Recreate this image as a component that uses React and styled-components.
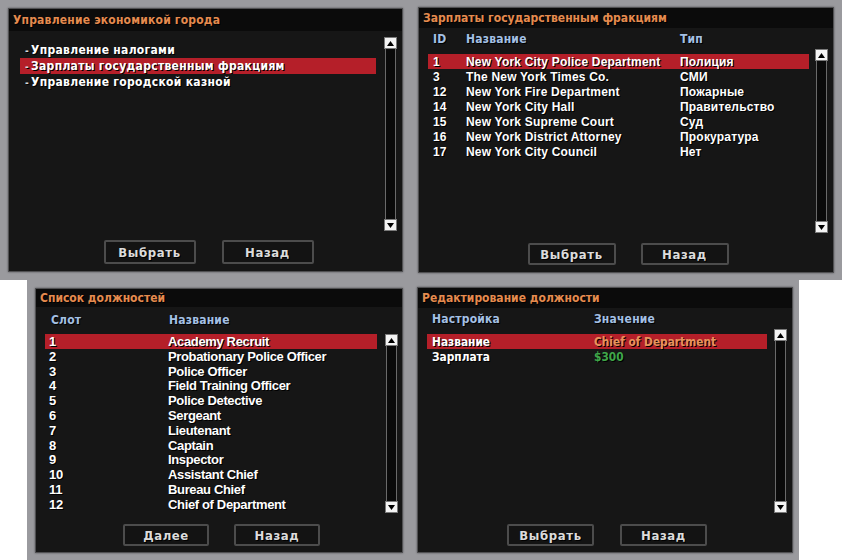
import React from 'react'
import styled, { createGlobalStyle } from 'styled-components'

const GlobalStyle = createGlobalStyle`
  html, body {
    margin: 0;
    padding: 0;
    background: #ffffff;
  }
`

const gtaFont = `
  font-family: "DejaVu Sans Condensed", "DejaVu Sans", sans-serif;
  font-stretch: condensed;
  font-weight: bold;
`

const Page = styled.div`
  width: 842px;
  height: 560px;
  background: #ffffff;
  overflow: hidden;
`

const Strip = styled.div`
  display: flex;
  align-items: flex-start;
  background: #9a9a9e;
  height: 280px;
  width: ${p => p.$width}px;
  margin-left: ${p => p.$offset || 0}px;
  padding: ${p => p.$pad};
  gap: ${p => p.$gap}px;
  box-sizing: border-box;
`

const Panel = styled.div`
  display: flex;
  flex-direction: column;
  width: ${p => p.$w}px;
  height: ${p => p.$h}px;
  margin-top: ${p => p.$top || 0}px;
  background: #161616;
  outline: 1px solid #505052;
  outline-offset: -1px;
  box-shadow: 0 0 2px rgba(0, 0, 0, 0.45);
  flex-shrink: 0;
`

const TitleBar = styled.div`
  ${gtaFont}
  height: ${p => p.$h}px;
  display: flex;
  align-items: center;
  padding-left: 5px;
  background: #0b0b0b;
  color: #e58b4f;
  font-size: 12px;
  letter-spacing: ${p => p.$spacing || 0}px;
  text-shadow: 1px 1px 0 #000;
  flex-shrink: 0;
`

const Body = styled.div`
  flex: 1;
  display: flex;
  flex-direction: column;
  padding: ${p => p.$pad};
`

const HeaderRow = styled.div`
  ${gtaFont}
  display: grid;
  grid-template-columns: ${p => p.$cols};
  align-items: center;
  height: 16px;
  margin-right: ${p => p.$right}px;
  padding-left: ${p => p.$indent}px;
  color: #a4c0e4;
  font-size: 12px;
  letter-spacing: 0.2px;
  text-shadow: 1px 1px 0 #000;
`

const Content = styled.div`
  display: flex;
  height: ${p => p.$h}px;
  gap: ${p => p.$gap}px;
  margin-top: ${p => p.$top || 0}px;
`

const List = styled.div`
  flex: 1;
  display: flex;
  flex-direction: column;
  padding-top: ${p => p.$top}px;
`

const Row = styled.div`
  display: grid;
  grid-template-columns: ${p => p.$cols};
  align-items: center;
  height: ${p => p.$h}px;
  padding-left: ${p => p.$indent}px;
  background: ${p => (p.$selected ? '#b51f29' : 'transparent')};
  color: #ffffff;
  white-space: nowrap;
  text-shadow: 1px 1px 0 #000;
  ${p => p.$font}
`

const menuFont = `
  ${gtaFont}
  font-size: 12px;
  letter-spacing: 0.3px;
`

const factionFont = `
  font-family: "Liberation Sans", Arial, sans-serif;
  font-weight: bold;
  font-size: 12px;
  letter-spacing: 0.2px;
`

const rankFont = `
  font-family: "Liberation Sans", Arial, sans-serif;
  font-weight: bold;
  font-size: 13px;
  letter-spacing: -0.35px;
`

const settingFont = `
  ${gtaFont}
  font-size: 11.8px;
  letter-spacing: 0;
`

const Dash = styled.span`
  color: #d8d8d8;
  margin-right: 2px;
  font-size: 10px;
`

const Value = styled.span`
  color: ${p => p.$color || '#ffffff'};
`

const Scrollbar = styled.div`
  display: flex;
  flex-direction: column;
  width: 13px;
  height: 100%;
  flex-shrink: 0;
`

const ArrowBox = styled.div`
  display: flex;
  align-items: center;
  justify-content: center;
  height: 12px;
  background: #f4f4f4;
  border: 1px solid #7a7a7a;
  box-sizing: border-box;
`

const Track = styled.div`
  flex: 1;
  background: #0a0a0a;
  border-left: 1px solid #6a6a6a;
  border-right: 1px solid #6a6a6a;
  margin: 0 1px;
`

const Buttons = styled.div`
  display: flex;
  justify-content: center;
  gap: ${p => p.$gap}px;
  margin-top: auto;
`

const Button = styled.div`
  ${gtaFont}
  display: flex;
  align-items: center;
  justify-content: center;
  width: ${p => p.$w}px;
  height: ${p => p.$h}px;
  box-sizing: border-box;
  background: #131313;
  border: 2px solid #4c4c4c;
  border-radius: 2px;
  color: #dcdcdc;
  font-size: 13px;
  letter-spacing: 0.6px;
  text-shadow: 1px 1px 0 #000;
`

const Arrow = ({ down }) => (
  <svg width="7" height="5" viewBox="0 0 7 5">
    <polygon points={down ? '0,0 7,0 3.5,5' : '0,5 7,5 3.5,0'} fill="#000" />
  </svg>
)

const Scroll = () => (
  <Scrollbar>
    <ArrowBox>
      <Arrow />
    </ArrowBox>
    <Track />
    <ArrowBox>
      <Arrow down />
    </ArrowBox>
  </Scrollbar>
)

const menuItems = ['Управление налогами', 'Зарплаты государственным фракциям', 'Управление городской казной']

const factions = [
  ['1', 'New York City Police Department', 'Полиция'],
  ['3', 'The New York Times Co.', 'СМИ'],
  ['12', 'New York Fire Department', 'Пожарные'],
  ['14', 'New York City Hall', 'Правительство'],
  ['15', 'New York Supreme Court', 'Суд'],
  ['16', 'New York District Attorney', 'Прокуратура'],
  ['17', 'New York City Council', 'Нет'],
]

const ranks = [
  'Academy Recruit',
  'Probationary Police Officer',
  'Police Officer',
  'Field Training Officer',
  'Police Detective',
  'Sergeant',
  'Lieutenant',
  'Captain',
  'Inspector',
  'Assistant Chief',
  'Bureau Chief',
  'Chief of Department',
]

const settings = [
  ['Название', 'Chief of Department', '#e8925c'],
  ['Зарплата', '$300', '#3fa64a'],
]

const App = () => (
  <Page>
    <GlobalStyle />
    <Strip $width={842} $pad="7px 8px 0 8px" $gap={15}>
      <Panel $w={395} $h={264} $top={1}>
        <TitleBar $h={23} $spacing={0.2}>Управление экономикой города</TitleBar>
        <Body $pad="6px 6px 8px 12px">
          <Content $h={194} $gap={8}>
            <List $top={5}>
              {menuItems.map((item, i) => (
                <Row key={item} $cols="1fr" $h={16} $indent={5} $selected={i === 1} $font={menuFont}>
                  <span>
                    <Dash>-</Dash>
                    {item}
                  </span>
                </Row>
              ))}
            </List>
            <Scroll />
          </Content>
          <Buttons $gap={26}>
            <Button $w={92} $h={24}>Выбрать</Button>
            <Button $w={92} $h={24}>Назад</Button>
          </Buttons>
        </Body>
      </Panel>
      <Panel $w={416} $h={266}>
        <TitleBar $h={21}>Зарплаты государственным фракциям</TitleBar>
        <Body $pad="3px 6px 8px 10px">
          <HeaderRow $cols="33px 214px 1fr" $right={19} $indent={5}>
            <span>ID</span>
            <span>Название</span>
            <span>Тип</span>
          </HeaderRow>
          <Content $h={184} $gap={6} $top={2}>
            <List $top={5}>
              {factions.map(([id, name, type], i) => (
                <Row key={id} $cols="33px 214px 1fr" $h={15} $indent={5} $selected={i === 0} $font={factionFont}>
                  <span>{id}</span>
                  <span>{name}</span>
                  <span>{type}</span>
                </Row>
              ))}
            </List>
            <Scroll />
          </Content>
          <Buttons $gap={25}>
            <Button $w={88} $h={22}>Выбрать</Button>
            <Button $w={88} $h={22}>Назад</Button>
          </Buttons>
        </Body>
      </Panel>
    </Strip>
    <Strip $width={772} $offset={27} $pad="7px 0 0 8px" $gap={14}>
      <Panel $w={368} $h={265} $top={1}>
        <TitleBar $h={19}>Список должностей</TitleBar>
        <Body $pad="5px 5px 7px 10px">
          <HeaderRow $cols="118px 1fr" $right={20} $indent={6}>
            <span>Слот</span>
            <span>Название</span>
          </HeaderRow>
          <Content $h={179} $gap={8} $top={6}>
            <List $top={0}>
              {ranks.map((rank, i) => (
                <Row key={rank} $cols="119px 1fr" $h={14.8} $indent={4} $selected={i === 0} $font={rankFont}>
                  <span>{i + 1}</span>
                  <span>{rank}</span>
                </Row>
              ))}
            </List>
            <Scroll />
          </Content>
          <Buttons $gap={25}>
            <Button $w={86} $h={22}>Далее</Button>
            <Button $w={86} $h={22}>Назад</Button>
          </Buttons>
        </Body>
      </Panel>
      <Panel $w={376} $h={266}>
        <TitleBar $h={21}>Редактирование должности</TitleBar>
        <Body $pad="3px 6px 7px 10px">
          <HeaderRow $cols="162px 1fr" $right={20} $indent={5}>
            <span>Настройка</span>
            <span>Значение</span>
          </HeaderRow>
          <Content $h={184} $gap={7} $top={2}>
            <List $top={5}>
              {settings.map(([key, value, color], i) => (
                <Row key={key} $cols="162px 1fr" $h={15} $indent={5} $selected={i === 0} $font={settingFont}>
                  <span>{key}</span>
                  <Value $color={color}>{value}</Value>
                </Row>
              ))}
            </List>
            <Scroll />
          </Content>
          <Buttons $gap={26}>
            <Button $w={87} $h={22}>Выбрать</Button>
            <Button $w={87} $h={22}>Назад</Button>
          </Buttons>
        </Body>
      </Panel>
    </Strip>
  </Page>
)

export default App
